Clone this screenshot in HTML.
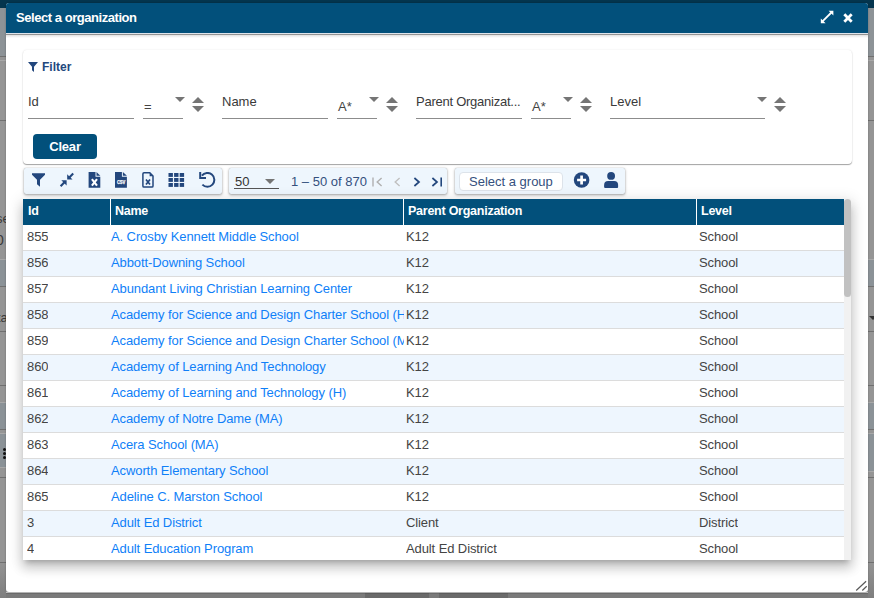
<!DOCTYPE html><html><head><meta charset="utf-8"><style>
*{box-sizing:border-box;margin:0;padding:0}
html,body{width:874px;height:598px;overflow:hidden;background:#959595;font-family:"Liberation Sans",sans-serif;font-size:13px;color:#333}
div,svg{position:absolute}
.bgl{height:1px;background:#707070}
.dd{width:0;height:0;border-left:5px solid transparent;border-right:5px solid transparent;border-top:5px solid #757575}
.up{width:0;height:0;border-left:6px solid transparent;border-right:6px solid transparent;border-bottom:6px solid #757575}
.dn{width:0;height:0;border-left:6px solid transparent;border-right:6px solid transparent;border-top:6px solid #757575}
.fl{height:1px;background:#8c8c8c}
.lab{line-height:16px;color:#3a3a3a;white-space:nowrap}
.tb{top:168px;height:26px;background:#eef6fd;border-radius:2px;box-shadow:0 1px 3px rgba(0,0,0,.35),0 0 1px rgba(0,0,0,.3)}
.th{top:198px;height:26px;line-height:26px;color:#fff;font-weight:bold;font-size:12.5px;letter-spacing:-0.25px;white-space:nowrap}
.ts{top:199px;width:1px;height:26px;background:#fff}
.row{left:23px;width:821px;height:26px;border-bottom:1px solid #dcdcdc;background:#fff}
.alt{background:#eef6fe}
.c{top:0;line-height:23px;white-space:nowrap;overflow:hidden;font-size:13px;height:25px;letter-spacing:-0.1px}
.c1{left:4px;color:#444}
.c2{left:88px;width:293px;color:#0f7ff8}
.c3{left:383px;color:#444}
.c4{left:676px;color:#444}
</style></head><body>
<div style="left:0;top:0;width:874px;height:8px;background:#04354e"></div>
<div style="left:0px;top:8px;width:6px;height:48px;background:#8d9397"></div>
<div class="bgl" style="left:0px;top:56px;width:6px"></div>
<div class="bgl" style="left:0px;top:120px;width:6px"></div>
<div class="bgl" style="left:0px;top:286px;width:6px"></div>
<div class="bgl" style="left:0px;top:331px;width:6px"></div>
<div class="bgl" style="left:0px;top:385px;width:6px"></div>
<div class="bgl" style="left:0px;top:429px;width:6px"></div>
<div class="bgl" style="left:0px;top:477px;width:6px"></div>
<div class="bgl" style="left:0px;top:562px;width:6px"></div>
<div style="left:0px;top:60px;width:6px;height:1px;background:#a8a8a8"></div>
<div style="left:0px;top:259px;width:6px;height:1px;background:#a8a8a8"></div>
<div style="left:0px;top:402px;width:6px;height:1px;background:#a8a8a8"></div>
<div style="left:0px;top:433px;width:6px;height:1px;background:#a8a8a8"></div>
<div style="left:0px;top:260px;width:6px;height:26px;background:#8b9297"></div>
<div style="left:0px;top:403px;width:6px;height:26px;background:#8b9297"></div>
<div style="left:0px;top:434px;width:6px;height:33px;background:#8b9297"></div>
<div style="left:0px;top:467px;width:6px;height:1px;background:#a8a8a8"></div>
<div style="left:868px;top:8px;width:6px;height:48px;background:#8d9397"></div>
<div class="bgl" style="left:868px;top:56px;width:6px"></div>
<div class="bgl" style="left:868px;top:120px;width:6px"></div>
<div class="bgl" style="left:868px;top:286px;width:6px"></div>
<div class="bgl" style="left:868px;top:331px;width:6px"></div>
<div class="bgl" style="left:868px;top:385px;width:6px"></div>
<div class="bgl" style="left:868px;top:429px;width:6px"></div>
<div class="bgl" style="left:868px;top:477px;width:6px"></div>
<div class="bgl" style="left:868px;top:562px;width:6px"></div>
<div style="left:868px;top:60px;width:6px;height:1px;background:#a8a8a8"></div>
<div style="left:868px;top:259px;width:6px;height:1px;background:#a8a8a8"></div>
<div style="left:868px;top:402px;width:6px;height:1px;background:#a8a8a8"></div>
<div style="left:868px;top:433px;width:6px;height:1px;background:#a8a8a8"></div>
<div style="left:868px;top:260px;width:6px;height:26px;background:#8b9297"></div>
<div style="left:868px;top:403px;width:6px;height:26px;background:#8b9297"></div>
<div style="left:868px;top:434px;width:6px;height:37px;background:#8b9297"></div>
<div style="left:868px;top:471px;width:6px;height:1px;background:#a8a8a8"></div>
<div style="left:-4px;top:211px;line-height:16px;font-size:13px;color:#3a3a3a">se</div>
<div style="left:-4px;top:232px;line-height:16px;font-size:14px;color:#3a3a3a">0</div>
<div style="left:-3px;top:310px;line-height:16px;font-size:13px;color:#3a3a3a">ta</div>
<div style="left:3px;top:448px;width:3px;height:3px;border-radius:2px;background:#111"></div>
<div style="left:3px;top:452px;width:3px;height:3px;border-radius:2px;background:#111"></div>
<div style="left:3px;top:456px;width:3px;height:3px;border-radius:2px;background:#111"></div>
<div class="dd" style="left:869px;top:316px;border-width:4px 4px 0 4px;border-top-color:#333"></div>
<div style="left:0;top:563px;width:6px;height:35px;background:linear-gradient(#939393,#7e7e7e)"></div>
<div style="left:868px;top:563px;width:6px;height:35px;background:linear-gradient(#939393,#7e7e7e)"></div>
<div style="left:6px;top:592px;width:862px;height:6px;background:linear-gradient(#c4c4c4 0,#c4c4c4 1px,#6c6c6c 1px,#6c6c6c 2px,#7a7a7a 2px)"></div>
<div style="left:365px;top:593px;width:64px;height:5px;background:linear-gradient(#5e5e5e 0,#5e5e5e 1px,#6a6a6a 1px)"></div>
<div style="left:439px;top:593px;width:69px;height:5px;background:linear-gradient(#5e5e5e 0,#5e5e5e 1px,#6a6a6a 1px)"></div>
<div style="left:6px;top:3px;width:862px;height:589px;background:#fff;border-radius:3px;box-shadow:0 0 2px rgba(0,0,0,.3)"></div>
<div style="left:6px;top:3px;width:862px;height:30px;background:#02507b;border-radius:3px 3px 0 0"></div>
<div style="left:6px;top:33px;width:862px;height:1px;background:#dfe5ec"></div>
<div style="left:6px;top:34px;width:862px;height:1px;background:#939393"></div>
<div style="left:6px;top:35px;width:862px;height:3px;background:linear-gradient(#e2e2e2,#fff)"></div>
<div style="left:16px;top:10px;line-height:16px;color:#fff;font-weight:bold;font-size:13px;letter-spacing:-0.45px;white-space:nowrap">Select a organization</div>
<svg style="left:820px;top:10px" width="14" height="14" viewBox="0 0 14 14"><path d="M2.5 11.4 L11.4 2.5" stroke="#fff" stroke-width="1.8"/><path d="M8.6 0.8 H13.4 V5.6 Z" fill="#fff"/><path d="M0.8 8.4 V13.2 H5.6 Z" fill="#fff"/></svg>
<svg style="left:843px;top:13px" width="10" height="10" viewBox="0 0 10 10"><path d="M1.3 1.3 L8.7 8.7 M8.7 1.3 L1.3 8.7" stroke="#fff" stroke-width="2.8"/></svg>
<div style="left:23px;top:50px;width:829px;height:114px;background:#fff;border-radius:4px;box-shadow:0 1px 1px rgba(0,0,0,.35),0 0 2px rgba(0,0,0,.1)"></div>
<svg style="left:28px;top:62px" width="10" height="10" viewBox="0 0 10 10"><path d="M0 0 H10 L6 4.8 V10 L4 8.3 V4.8 Z" fill="#23477d"/></svg>
<div class="lab" style="left:42px;top:59px;font-weight:bold;font-size:12px;color:#23477d">Filter</div>
<div class="lab" style="left:28px;top:94px">Id</div>
<div class="fl" style="left:28px;top:118px;width:106px"></div>
<div class="lab" style="left:144px;top:99px;color:#444">=</div>
<div class="fl" style="left:143px;top:118px;width:40px"></div>
<div class="dd" style="left:175px;top:97px"></div>
<div class="up" style="left:192px;top:97px"></div>
<div class="dn" style="left:192px;top:106px"></div>
<div class="lab" style="left:222px;top:94px">Name</div>
<div class="fl" style="left:222px;top:118px;width:106px"></div>
<div class="lab" style="left:338px;top:99px;color:#444">A*</div>
<div class="fl" style="left:337px;top:118px;width:40px"></div>
<div class="dd" style="left:369px;top:97px"></div>
<div class="up" style="left:386px;top:97px"></div>
<div class="dn" style="left:386px;top:106px"></div>
<div class="lab" style="left:416px;top:94px"><span style="letter-spacing:-0.25px">Parent Organizat...</span></div>
<div class="fl" style="left:416px;top:118px;width:106px"></div>
<div class="lab" style="left:532px;top:99px;color:#444">A*</div>
<div class="fl" style="left:531px;top:118px;width:40px"></div>
<div class="dd" style="left:563px;top:97px"></div>
<div class="up" style="left:580px;top:97px"></div>
<div class="dn" style="left:580px;top:106px"></div>
<div class="lab" style="left:610px;top:94px">Level</div>
<div class="fl" style="left:610px;top:118px;width:155px"></div>
<div class="dd" style="left:757px;top:97px"></div>
<div class="up" style="left:774px;top:97px"></div>
<div class="dn" style="left:774px;top:106px"></div>
<div style="left:33px;top:134px;width:64px;height:25px;background:#02507b;border-radius:4px;color:#fff;font-weight:bold;text-align:center;line-height:25px;font-size:13px;letter-spacing:-0.2px">Clear</div>
<div class="tb" style="left:24px;width:198px"></div>
<div class="tb" style="left:229px;width:218px"></div>
<div class="tb" style="left:455px;width:170px"></div>
<svg style="left:32px;top:173px" width="13" height="14" viewBox="0 0 13 14"><path d="M0 0.3 H13 V1.8 L8 6.8 V13.7 L5 11.2 V6.8 L0 1.8 Z" fill="#23477d"/></svg>
<svg style="left:59px;top:172px" width="16" height="16" viewBox="0 0 16 16"><path d="M14.2 1.6 L9.6 6.2" stroke="#23477d" stroke-width="2.1"/><path d="M8.2 2.3 V7.6 H13.5 Z" fill="#23477d"/><path d="M1.6 14.2 L6.2 9.6" stroke="#23477d" stroke-width="2.1"/><path d="M2.3 8.2 H7.6 V13.5 Z" fill="#23477d"/></svg>
<svg style="left:88px;top:172px" width="13" height="16" viewBox="0 0 13 16"><path d="M0.6 0 H7.5 V4.7 H12.3 V15.7 H0.6 Z" fill="#23477d"/><path d="M8.5 0 L12.3 3.7 H8.5 Z" fill="#23477d"/><path d="M3.9 7.2 L9 13.7 M9 7.2 L3.9 13.7" stroke="#fff" stroke-width="2.1"/></svg>
<svg style="left:115px;top:172px" width="12" height="16" viewBox="0 0 12 16"><path d="M0 0 H6.9 V4.7 H11.9 V15.7 H0 Z" fill="#23477d"/><path d="M7.9 0 L11.9 3.7 H7.9 Z" fill="#23477d"/><text x="1.9" y="11.8" font-family="Liberation Sans" font-size="4.8" font-weight="bold" fill="#fff" stroke="#fff" stroke-width="0.25" textLength="8.4" lengthAdjust="spacingAndGlyphs">CSV</text></svg>
<svg style="left:142px;top:172px" width="12" height="16" viewBox="0 0 12 16"><path d="M2 0.8 H7.8 L11 4 V14 Q11 15.1 9.9 15.1 H2 Q0.9 15.1 0.9 14 V2 Q0.9 0.8 2 0.8 Z" fill="none" stroke="#23477d" stroke-width="1.5"/><path d="M7.6 1 V4.2 H10.8 Z" fill="#23477d"/><path d="M4 7.5 L8 12.6 M8 7.5 L4 12.6" stroke="#23477d" stroke-width="1.7"/></svg>
<svg style="left:168px;top:173px" width="17" height="14" viewBox="-0.5 0 17 14"><rect x="0" y="0" width="4.4" height="3.9" fill="#23477d"/><rect x="0" y="5" width="4.4" height="3.9" fill="#23477d"/><rect x="0" y="10" width="4.4" height="3.9" fill="#23477d"/><rect x="5.6" y="0" width="4.4" height="3.9" fill="#23477d"/><rect x="5.6" y="5" width="4.4" height="3.9" fill="#23477d"/><rect x="5.6" y="10" width="4.4" height="3.9" fill="#23477d"/><rect x="11.2" y="0" width="4.4" height="3.9" fill="#23477d"/><rect x="11.2" y="5" width="4.4" height="3.9" fill="#23477d"/><rect x="11.2" y="10" width="4.4" height="3.9" fill="#23477d"/></svg>
<svg style="left:199px;top:172px" width="17" height="17" viewBox="0 0 17 17"><path d="M2.9 3.7 A6.9 6.9 0 1 1 3.4 12.6" fill="none" stroke="#23477d" stroke-width="2"/><path d="M1.2 0.1 V6 H7" fill="none" stroke="#23477d" stroke-width="2"/></svg>
<div class="lab" style="left:235px;top:174px;color:#333">50</div>
<div style="left:234px;top:188px;width:45px;height:1px;background:#555"></div>
<div class="dd" style="left:265px;top:179px"></div>
<div class="lab" style="left:291px;top:174px;color:#34507d">1 – 50 of 870</div>
<svg style="left:372px;top:177px" width="11" height="10" viewBox="0 0 11 10"><path d="M1 0.5 V9.5" stroke="#b0b0b0" stroke-width="1.4"/><path d="M9.6 1 L5.2 5 L9.6 9" fill="none" stroke="#b0b0b0" stroke-width="1.4"/></svg>
<svg style="left:394px;top:177px" width="7" height="10" viewBox="0 0 7 10"><path d="M5.6 1 L1.2 5 L5.6 9" fill="none" stroke="#c0c0c0" stroke-width="1.4"/></svg>
<svg style="left:413px;top:177px" width="8" height="10" viewBox="0 0 8 10"><path d="M1.4 1 L6 5 L1.4 9" fill="none" stroke="#23477d" stroke-width="1.7"/></svg>
<svg style="left:431px;top:177px" width="12" height="10" viewBox="0 0 12 10"><path d="M1.4 1 L6 5 L1.4 9" fill="none" stroke="#23477d" stroke-width="1.7"/><path d="M10.2 0.5 V9.5" stroke="#23477d" stroke-width="1.6"/></svg>
<div style="left:459px;top:172px;width:104px;height:19px;background:#fff;border:1px solid #dde3ea;border-radius:4px"></div>
<div class="lab" style="left:469px;top:174px;color:#34507d">Select a group</div>
<svg style="left:573px;top:172px" width="17" height="16" viewBox="0 0 17 16"><circle cx="8.6" cy="8" r="7.8" fill="#23477d"/><path d="M8.6 3.6 V12.4 M4.1 8 H13.1" stroke="#fff" stroke-width="2.7"/></svg>
<svg style="left:604px;top:172px" width="15" height="16" viewBox="0 0 15 16"><circle cx="7.1" cy="3.9" r="3.9" fill="#23477d"/><path d="M0.1 14.9 V13 Q0.1 9 4.1 9 H10.1 Q14.1 9 14.1 13 V14.9 Q14.1 15.9 13.1 15.9 H1.1 Q0.1 15.9 0.1 14.9 Z" fill="#23477d"/></svg>
<div style="left:23px;top:199px;width:828px;height:361px;background:#fff;box-shadow:0 5px 5px -3px rgba(0,0,0,.2),0 8px 10px 1px rgba(0,0,0,.14),0 3px 14px 2px rgba(0,0,0,.12)"></div>
<div style="left:23px;top:199px;width:821px;height:26px;background:#02507b"></div>
<div class="ts" style="left:110px"></div><div class="ts" style="left:403px"></div><div class="ts" style="left:696px"></div>
<div class="th" style="left:28px">Id</div><div class="th" style="left:115px">Name</div><div class="th" style="left:408px">Parent Organization</div><div class="th" style="left:701px">Level</div>
<div style="left:0;top:0;width:874px;height:560px;overflow:hidden">
<div class="row" style="top:225px"><div class="c c1">855</div><div class="c c2">A. Crosby Kennett Middle School</div><div class="c c3">K12</div><div class="c c4">School</div></div>
<div class="row alt" style="top:251px"><div class="c c1">856</div><div class="c c2">Abbott-Downing School</div><div class="c c3">K12</div><div class="c c4">School</div></div>
<div class="row" style="top:277px"><div class="c c1">857</div><div class="c c2">Abundant Living Christian Learning Center</div><div class="c c3">K12</div><div class="c c4">School</div></div>
<div class="row alt" style="top:303px"><div class="c c1">858</div><div class="c c2">Academy for Science and Design Charter School (H)</div><div class="c c3">K12</div><div class="c c4">School</div></div>
<div class="row" style="top:329px"><div class="c c1">859</div><div class="c c2">Academy for Science and Design Charter School (M)</div><div class="c c3">K12</div><div class="c c4">School</div></div>
<div class="row alt" style="top:355px"><div class="c c1">860</div><div class="c c2">Academy of Learning And Technology</div><div class="c c3">K12</div><div class="c c4">School</div></div>
<div class="row" style="top:381px"><div class="c c1">861</div><div class="c c2">Academy of Learning and Technology (H)</div><div class="c c3">K12</div><div class="c c4">School</div></div>
<div class="row alt" style="top:407px"><div class="c c1">862</div><div class="c c2">Academy of Notre Dame (MA)</div><div class="c c3">K12</div><div class="c c4">School</div></div>
<div class="row" style="top:433px"><div class="c c1">863</div><div class="c c2">Acera School (MA)</div><div class="c c3">K12</div><div class="c c4">School</div></div>
<div class="row alt" style="top:459px"><div class="c c1">864</div><div class="c c2">Acworth Elementary School</div><div class="c c3">K12</div><div class="c c4">School</div></div>
<div class="row" style="top:485px"><div class="c c1">865</div><div class="c c2">Adeline C. Marston School</div><div class="c c3">K12</div><div class="c c4">School</div></div>
<div class="row alt" style="top:511px"><div class="c c1">3</div><div class="c c2">Adult Ed District</div><div class="c c3">Client</div><div class="c c4">District</div></div>
<div class="row" style="top:537px"><div class="c c1">4</div><div class="c c2">Adult Education Program</div><div class="c c3">Adult Ed District</div><div class="c c4">School</div></div>
</div>
<div style="left:23px;top:560px;width:828px;height:40px;background:transparent"></div>
<div style="left:844px;top:199px;width:7px;height:361px;background:#f1f1f1"></div>
<div style="left:844px;top:199px;width:7px;height:98px;background:#c1c1c1;border-radius:3.5px"></div>
<svg style="left:855px;top:580px" width="13" height="12" viewBox="0 0 13 12"><path d="M1.2 10.5 L11.1 1.2 M7.3 10.5 L11.7 6.2" stroke="#5a5a5a" stroke-width="1.2"/></svg>
</body></html>
